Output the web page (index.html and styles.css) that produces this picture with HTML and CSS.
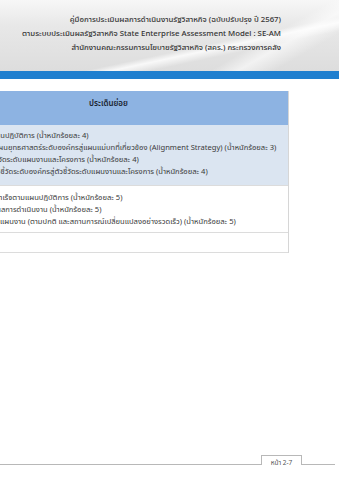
FILE: index.html
```html
<!DOCTYPE html>
<html lang="th">
<head>
<meta charset="utf-8">
<link rel="stylesheet" href="styles.css">
</head>
<body>
<div class="page">
  <header class="banner">
    <div class="titles">
      <p>คู่มือการประเมินผลการดำเนินงานรัฐวิสาหกิจ (ฉบับปรับปรุง ปี 2567)</p>
      <p>ตามระบบประเมินผลรัฐวิสาหกิจ State Enterprise Assessment Model : SE-AM</p>
      <p>สำนักงานคณะกรรมการนโยบายรัฐวิสาหกิจ (สคร.) กระทรวงการคลัง</p>
    </div>
  </header>
  <div class="bar"></div>
  <main class="content">
    <div class="table">
      <div class="thead">ประเด็นย่อย</div>
      <div class="row shaded">
        <p class="l1">แผนปฏิบัติการ (น้ำหนักร้อยละ 4)</p>
        <p class="l2">แผนยุทธศาสตร์ระดับองค์กรสู่แผนแม่บทที่เกี่ยวข้อง (Alignment Strategy) (น้ำหนักร้อยละ 3)</p>
        <p class="l3">ชี้วัดระดับแผนงานและโครงการ (น้ำหนักร้อยละ 4)</p>
        <p class="l4">ตัวชี้วัดระดับองค์กรสู่ตัวชี้วัดระดับแผนงานและโครงการ (น้ำหนักร้อยละ 4)</p>
      </div>
      <div class="row plain">
        <p class="l5">สำเร็จตามแผนปฏิบัติการ (น้ำหนักร้อยละ 5)</p>
        <p class="l6">ผลการดำเนินงาน (น้ำหนักร้อยละ 5)</p>
        <p class="l7">แผนงาน (ตามปกติ และสถานการณ์เปลี่ยนแปลงอย่างรวดเร็ว) (น้ำหนักร้อยละ 5)</p>
      </div>
      <div class="row empty"></div>
    </div>
  </main>
  <footer class="footer">
    <div class="rule"></div>
    <div class="tab">หน้า 2-7</div>
    <div class="rule end"></div>
  </footer>
</div>
</body>
</html>
```
FILE: styles.css
```css
html, body {
  margin: 0;
  padding: 0;
  background: #ffffff;
}
body {
  width: 339px;
  height: 480px;
  overflow: hidden;
  font-family: "Noto Sans", "Noto Sans Thai", Tahoma, sans-serif;
  color: #333;
}
p { margin: 0; }
.page {
  height: 480px;
  display: flex;
  flex-direction: column;
}
.banner {
  height: 71px;
  background:
    linear-gradient(168deg, rgba(255,255,255,0) 62%, rgba(255,255,255,0.8) 66%, rgba(255,255,255,0) 72%),
    linear-gradient(150deg, rgba(255,255,255,0) 72%, rgba(255,255,255,0.6) 78%, rgba(255,255,255,0) 86%),
    linear-gradient(180deg, #f7f7f7 0%, #e8e8e8 35%, #dddddd 100%);
  display: flex;
  justify-content: flex-end;
  box-sizing: border-box;
  padding: 12px 58px 0 0;
}
.titles {
  text-align: right;
  font-size: 7.8px;
  line-height: 14px;
  color: #333333;
  font-weight: 500;
  white-space: nowrap;
}
.bar {
  height: 8px;
  background: #1f7fcf;
}
.content {
  padding-top: 12px;
}
.table {
  width: 289px;
  border-right: 1px solid #d6d6d6;
  box-sizing: border-box;
}
.thead {
  height: 34px;
  background: #8db3e2;
  color: #1c2633;
  font-size: 8px;
  font-weight: 600;
  text-align: center;
  padding-right: 71px;
  box-sizing: border-box;
  line-height: 24px;
}
.row {
  border-bottom: 1px solid #dcdcdc;
  font-size: 7.6px;
  line-height: 12px;
  color: #3a3a3a;
  white-space: nowrap;
  overflow: hidden;
  box-sizing: border-box;
}
.row.shaded {
  background: #dbe5f1;
  height: 61px;
  padding: 4px 0 6px 0;
}
.row.plain {
  height: 47px;
  padding: 5px 0 6px 0;
}
.row.empty {
  height: 20px;
}
.l1 { margin-left: -9px; }
.l2 { margin-left: -6px; }
.l3 { margin-left: -6px; }
.l4 { margin-left: -8px; }
.l5 { margin-left: -5px; }
.l6 { margin-left: -4px; }
.l7 { margin-left: 0; }
.footer {
  margin-top: auto;
  margin-bottom: 15px;
  display: flex;
  align-items: flex-end;
  padding-right: 4px;
}
.rule {
  flex: 1;
  border-bottom: 1px solid #b8b8b8;
}
.rule.end {
  flex: 0 0 33px;
}
.tab {
  width: 41px;
  height: 10px;
  border: 1px solid #b8b8b8;
  border-bottom: none;
  font-size: 6.5px;
  line-height: 13px;
  text-align: center;
  color: #555;
  box-sizing: border-box;
}
```
